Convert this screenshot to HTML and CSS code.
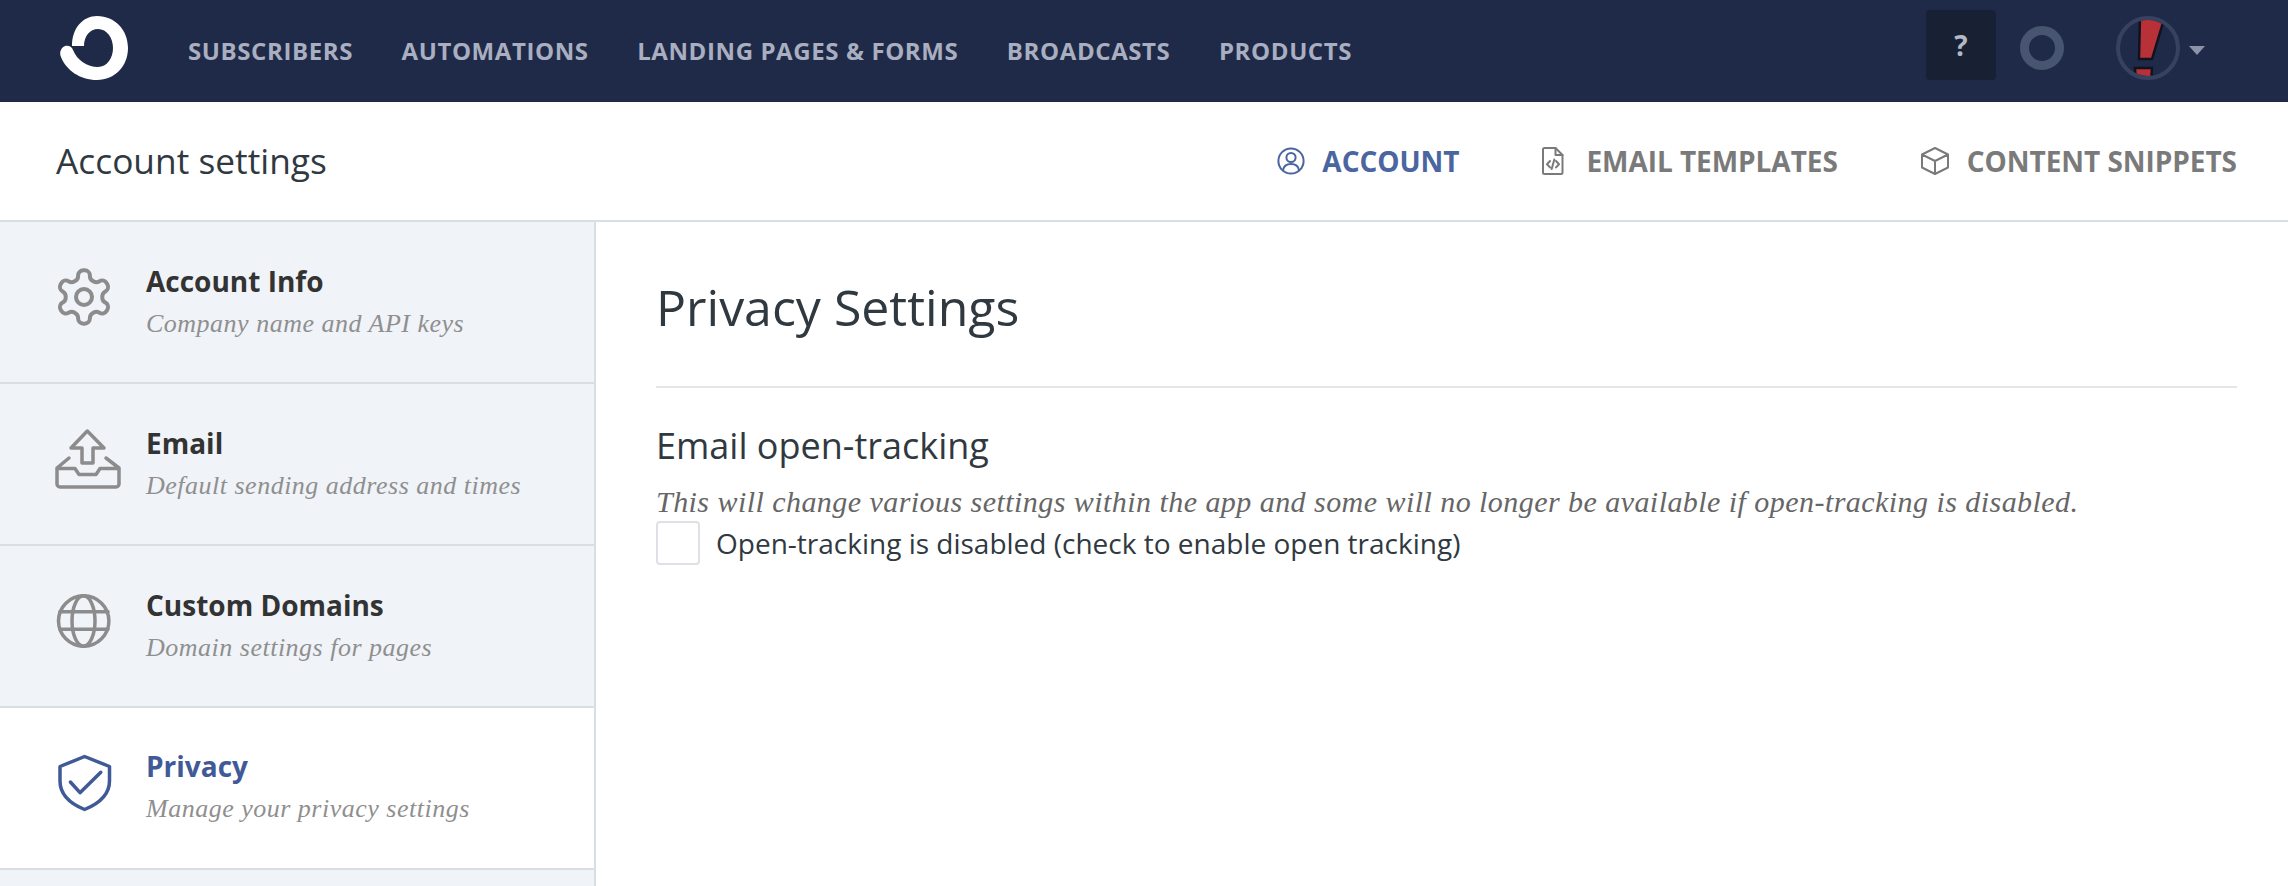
FILE: index.html
```html
<!DOCTYPE html>
<html lang="en">
<head>
<meta charset="utf-8">
<title>Account settings</title>
<link rel="stylesheet" href="styles.css">
</head>
<body>
<header class="topbar">
  <svg class="logo" viewBox="58 14 72 68"><path d="M72 46C72 28 83 16 97 16C115 16 128 30 128 48C128 66 115 80 97 80C80 80 66 70 61 57C59 52 61 48 65 46C69 45 72 47 73 50C77 60 87 67 98 67C107 67 113 58 113 48C113 38 107 29 98 29C90 29 84 36 84 46Z"/></svg>
  <nav class="mainnav">
    <a>SUBSCRIBERS</a><a>AUTOMATIONS</a><a>LANDING PAGES &amp; FORMS</a><a>BROADCASTS</a><a>PRODUCTS</a>
  </nav>
  <div class="topright">
    <div class="help">?</div>
    <div class="ring"></div>
    <div class="avatar">
      <svg viewBox="0 0 56 56"><path class="mark" d="M20 -4H45L32 39H19Z"/><path class="mark" d="M15 48H32L31 64H16Z"/></svg>
    </div>
    <div class="caret"></div>
  </div>
</header>
<div class="subbar">
  <div class="subtitle">Account settings</div>
  <div class="tabs">
    <a class="tab active"><svg class="tabicon icon-account" viewBox="0 0 28 28"><circle cx="14" cy="14" r="12.600"/><circle cx="14" cy="10.500" r="4.600"/><path d="M6 23.500c.6-4.400 3.600-6.400 8-6.400s7.400 2 8 6.400"/></svg>ACCOUNT</a>
    <a class="tab"><svg class="tabicon icon-file" viewBox="0 0 22 28"><path d="M2.500 1h11l7 7v17.500a1.500 1.500 0 0 1-1.500 1.500h-16.500a1.500 1.500 0 0 1-1.500-1.500v-23a1.500 1.500 0 0 1 1.500-1.500z"/><path d="M13.500 1v7h7M8 14l-3 3.200 3 3.200M14 14l3 3.200-3 3.200M12.300 12.500l-2.600 9.500"/></svg>EMAIL TEMPLATES</a>
    <a class="tab"><svg class="tabicon icon-cube" viewBox="0 0 28 28"><path d="M14 1l13 6.500v13L14 27 1 20.500v-13zM1 7.500L14 14l13-6.500M14 14v13"/></svg>CONTENT SNIPPETS</a>
  </div>
</div>
<div class="body">
  <aside class="sidebar">
    <a class="item">
      <svg class="itemicon icon-gear" viewBox="0 0 24 24"><path d="M12.220 2h-.44a2 2 0 0 0-2 2v.18a2 2 0 0 1-1 1.730l-.43.25a2 2 0 0 1-2 0l-.15-.08a2 2 0 0 0-2.730.730l-.22.38a2 2 0 0 0 .730 2.730l.15.1a2 2 0 0 1 1 1.720v.51a2 2 0 0 1-1 1.740l-.15.09a2 2 0 0 0-.730 2.730l.22.38a2 2 0 0 0 2.730.730l.15-.08a2 2 0 0 1 2 0l.43.25a2 2 0 0 1 1 1.730V20a2 2 0 0 0 2 2h.44a2 2 0 0 0 2-2v-.18a2 2 0 0 1 1-1.730l.43-.25a2 2 0 0 1 2 0l.15.08a2 2 0 0 0 2.730-.730l.22-.39a2 2 0 0 0-.730-2.730l-.15-.08a2 2 0 0 1-1-1.740v-.5a2 2 0 0 1 1-1.740l.15-.09a2 2 0 0 0 .730-2.730l-.22-.38a2 2 0 0 0-2.730-.730l-.15.08a2 2 0 0 1-2 0l-.43-.25a2 2 0 0 1-1-1.730V4a2 2 0 0 0-2-2z"/><circle cx="12" cy="12" r="3"/></svg>
      <div><div class="itemtitle">Account Info</div><div class="itemsub">Company name and API keys</div></div>
    </a>
    <a class="item">
      <svg class="itemicon" viewBox="0 0 64 64"><path d="M35.300 4L52 21H41V36H30V21H19Z"/><path d="M17 31L5 41V57a3 3 0 0 0 3 3H64a3 3 0 0 0 3-3V41L54 31M5 41.500H23L27 47.500H44L48 41.500H67"/></svg>
      <div><div class="itemtitle">Email</div><div class="itemsub">Default sending address and times</div></div>
    </a>
    <a class="item">
      <svg class="itemicon" viewBox="0 0 64 64"><circle cx="31.700" cy="32" r="25.200"/><ellipse cx="31.500" cy="32" rx="11.500" ry="25.200"/><path d="M8 22.700H56M8 40.300H56"/></svg>
      <div><div class="itemtitle">Custom Domains</div><div class="itemsub">Domain settings for pages</div></div>
    </a>
    <a class="item current">
      <svg class="itemicon" viewBox="0 0 64 64"><path d="M32.600 5.500L57.500 15.500V30C57.500 44 46 53 32.600 58.500C19 53 8 44 8 30V15.500Z"/><path d="M18.400 31L28 41.700L48.800 21.300"/></svg>
      <div><div class="itemtitle">Privacy</div><div class="itemsub">Manage your privacy settings</div></div>
    </a>
  </aside>
  <main class="content">
    <h1 class="pagetitle">Privacy Settings</h1>
    <h2 class="sectiontitle">Email open-tracking</h2>
    <p class="note">This will change various settings within the app and some will no longer be available if open-tracking is disabled.</p>
    <label class="check"><span class="box"></span>Open-tracking is disabled (check to enable open tracking)</label>
  </main>
</div>
</body>
</html>
```

FILE: styles.css
```css
* { box-sizing: border-box; }
html, body { margin: 0; height: 886px; overflow: hidden; background: #fff; }
body { display: flex; flex-direction: column; font-family: "Open Sans", sans-serif; }
svg { display: block; flex: none; }

.topbar { flex: none; height: 102px; background: #1f2a48; display: flex; align-items: center; padding-left: 58px; }
.logo { width: 72px; height: 68px; fill: #fff; margin-bottom: 6px; }
.mainnav { display: flex; gap: 48.500px; margin-left: 58px; margin-bottom: 2px; }
.mainnav a { font-size: 24px; font-weight: 700; color: #a9afc0; letter-spacing: .6px; }
.topright { margin-left: auto; display: flex; align-items: center; padding: 0 83px 6px 0; }
.help { width: 70px; height: 70px; margin-bottom: 6px; border-radius: 4px; background: #182033; color: #b4b9c6; font-size: 28px; font-weight: 700; display: flex; align-items: center; justify-content: center; }
.ring { width: 44px; height: 44px; border: 9px solid #475570; border-radius: 50%; margin-left: 24px; }
.avatar { width: 64px; height: 64px; border: 4px solid #36425f; border-radius: 50%; margin-left: 52px; overflow: hidden; }
.avatar svg { width: 56px; height: 56px; }
.mark { fill: #b93138; stroke: #10131f; stroke-width: 2.500; }
.caret { width: 0; height: 0; border-left: 8px solid transparent; border-right: 8px solid transparent; border-top: 9px solid #8c93a8; margin-left: 9px; margin-top: 5px; }

.subbar { flex: none; height: 120px; border-bottom: 2px solid #d9dee3; display: flex; align-items: center; padding: 0 51px 0 56px; }
.subtitle { font-size: 35.300px; color: #30393f; margin-bottom: 2px; }
.tabs { margin-left: auto; display: flex; gap: 83px; }
.tab { display: flex; align-items: center; gap: 18px; font-size: 28px; font-weight: 700; color: #7a7a7a; letter-spacing: -.05px; }
.tab.active { color: #4a659f; gap: 17px; }
.tabicon { height: 28px; fill: none; stroke: #7a7a7a; stroke-width: 2; stroke-linejoin: round; stroke-linecap: round; }
.icon-account { width: 28px; stroke: #4a659f; }
.icon-file { width: 22px; margin-right: 4px; }
.icon-cube { width: 28px; }

.body { flex: 1; display: flex; min-height: 0; }
.sidebar { flex: none; width: 596px; background: #f0f3f8; border-right: 2px solid #d9dee3; }
.item { height: 162px; border-bottom: 2px solid #d9dee3; display: flex; align-items: flex-start; padding: 43px 0 0 52px; gap: 30px; color: #333; }
.item.current { background: #fff; color: #3f5a96; }
.itemicon { width: 64px; height: 64px; fill: none; stroke: #8c8c8c; stroke-width: 3.500; stroke-linejoin: round; stroke-linecap: round; overflow: visible; }
.itemicon.icon-gear { stroke-width: 1.500; }
.current .itemicon { stroke: #3f5a96; }
.itemtitle { font-size: 28px; font-weight: 700; line-height: 38px; margin-top: -3px; }
.current .itemtitle { margin-top: -4px; }
.itemsub { font-family: "Liberation Serif", serif; font-style: italic; font-size: 26px; line-height: 34px; margin-top: 7px; color: #8f8f8f; letter-spacing: .5px; }

.content { flex: 1; min-width: 0; padding: 0 51px 0 60px; }
.pagetitle { margin: 0; height: 166px; padding-top: 51px; font-size: 50px; line-height: 68px; font-weight: 400; color: #30393f; border-bottom: 2px solid #e3e7ea; }
.sectiontitle { margin: 36px 0 0; font-size: 36px; line-height: 44px; font-weight: 400; color: #30393f; }
.note { margin: 15px 0 0; font-family: "Liberation Serif", serif; font-style: italic; font-size: 30px; line-height: 38px; color: #666; letter-spacing: .45px; }
.check { display: flex; align-items: center; gap: 16px; font-size: 28px; color: #30393f; margin-top: 0; }
.box { width: 44px; height: 44px; border: 2px solid #dde1e6; border-radius: 4px; background: #fff; }
```
